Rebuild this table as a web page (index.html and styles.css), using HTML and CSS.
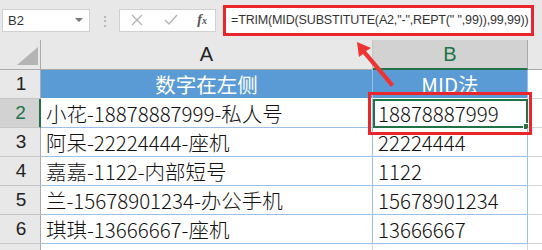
FILE: index.html
```html
<!DOCTYPE html>
<html>
<head>
<meta charset="utf-8">
<link rel="stylesheet" href="styles.css">
</head>
<body>
<div class="app">
  <div class="toolbar">
    <div class="namebox"><span>B2</span><span class="caret"></span></div>
    <div class="sep">⋮</div>
    <div class="btns">
      <svg class="ico" width="14" height="14" viewBox="0 0 14 14"><path d="M2 2L12 12M12 2L2 12" stroke="#b5b5b5" stroke-width="1.4" fill="none"/></svg>
      <svg class="ico" width="16" height="14" viewBox="0 0 16 14"><path d="M2 7L6 11L14 2" stroke="#b5b5b5" stroke-width="1.4" fill="none"/></svg>
      <span class="fx">f<sub>x</sub></span>
    </div>
    <div class="formula">=TRIM(MID(SUBSTITUTE(A2,"-",REPT(" ",99)),99,99))</div>
  </div>
  <div class="sheet">
    <div class="corner"><span class="tri"></span></div>
    <div class="colh">A</div>
    <div class="colh sel">B</div>
    <div class="colh rest"></div>

    <div class="rowh">1</div>
    <div class="cell head">数字在左侧</div>
    <div class="cell head">MID法</div>
    <div class="cell blank"></div>

    <div class="rowh sel">2</div>
    <div class="cell">小花-18878887999-私人号</div>
    <div class="cell active">18878887999<span class="handle"></span></div>
    <div class="cell blank"></div>

    <div class="rowh">3</div>
    <div class="cell">阿呆-22224444-座机</div>
    <div class="cell">22224444</div>
    <div class="cell blank"></div>

    <div class="rowh">4</div>
    <div class="cell">嘉嘉-1122-内部短号</div>
    <div class="cell">1122</div>
    <div class="cell blank"></div>

    <div class="rowh">5</div>
    <div class="cell">兰-15678901234-办公手机</div>
    <div class="cell">15678901234</div>
    <div class="cell blank"></div>

    <div class="rowh">6</div>
    <div class="cell">琪琪-13666667-座机</div>
    <div class="cell">13666667</div>
    <div class="cell blank"></div>

    <div class="rowh last"></div>
    <div class="cell lastc"></div>
    <div class="cell lastc"></div>
    <div class="cell blank"></div>
  </div>
  <div class="redbox"></div>
  <svg class="arrow" width="542" height="250" viewBox="0 0 542 250">
    <polygon points="357,42 371,48 366,51 394,84 391,87 363,54 359,57" fill="#ee3333"/>
  </svg>
</div>
</body>
</html>
```

FILE: styles.css
```css
html, body {
  margin: 0;
  padding: 0;
  background: #e8e8e8;
}
.app {
  position: relative;
  width: 542px;
  height: 250px;
  overflow: hidden;
  font-family: "Noto Sans CJK SC", "Noto Sans", sans-serif;
}
.toolbar {
  height: 40px;
  display: flex;
  align-items: center;
  background: #e8e8e8;
}
.namebox {
  margin-left: 2px;
  width: 88px;
  height: 23px;
  background: #fff;
  border: 1px solid #d0d0d0;
  display: flex;
  align-items: center;
  justify-content: space-between;
  padding: 0 6px 0 5px;
  box-sizing: border-box;
  font-family: "Liberation Sans", Arial, sans-serif;
  font-size: 13px;
  color: #333;
}
.caret {
  width: 0;
  height: 0;
  border-left: 4px solid transparent;
  border-right: 4px solid transparent;
  border-top: 4px solid #777;
}
.sep {
  width: 28px;
  text-align: center;
  color: #a8a8a8;
  font-size: 14px;
  margin-left: 1px;
}
.btns {
  width: 97px;
  height: 23px;
  box-sizing: border-box;
  background: #fff;
  border: 1px solid #d0d0d0;
  display: flex;
  align-items: center;
  justify-content: space-between;
  padding: 0 8px 0 10px;
}
.fx {
  font-family: "Liberation Serif", serif;
  font-style: italic;
  font-weight: bold;
  font-size: 14px;
  color: #555;
}
.fx sub {
  font-size: 10px;
  vertical-align: baseline;
}
.formula {
  margin-left: 7px;
  width: 311px;
  height: 31px;
  box-sizing: border-box;
  background: #fff;
  border: 3px solid #e8262b;
  display: flex;
  align-items: center;
  padding-left: 5px;
  font-family: "Liberation Sans", Arial, sans-serif;
  font-size: 12.5px;
  color: #333;
  white-space: nowrap;
  letter-spacing: -0.15px;
}
.sheet {
  display: grid;
  grid-template-columns: 41px 332px 155px 14px;
  grid-template-rows: 30px repeat(7, 29px);
  background: #fff;
}
.corner {
  background: #e8e8e8;
  border-right: 1px solid #ababab;
  border-bottom: 1px solid #ababab;
  position: relative;
}
.tri {
  position: absolute;
  right: 2px;
  bottom: 4px;
  width: 0;
  height: 0;
  border-left: 21px solid transparent;
  border-bottom: 18px solid #b4b4b4;
}
.colh {
  background: #e8e8e8;
  border-right: 1px solid #c6c6c6;
  border-bottom: 1px solid #ababab;
  display: flex;
  align-items: center;
  justify-content: center;
  font-family: "Liberation Sans", Arial, sans-serif;
  font-size: 20px;
  color: #222;
  box-sizing: border-box;
}
.colh.sel {
  background: #d2d2d2;
  color: #217346;
  border-bottom: 2px solid #217346;
  border-right-color: #ababab;
}
.colh.rest {
  border-right: none;
}
.rowh {
  background: #e8e8e8;
  border-right: 1px solid #ababab;
  border-bottom: 1px solid #c6c6c6;
  display: flex;
  align-items: center;
  justify-content: center;
  font-family: "Liberation Sans", Arial, sans-serif;
  font-size: 19px;
  color: #222;
  padding-left: 2px;
}
.rowh.sel {
  background: #d2d2d2;
  color: #217346;
  border-right: 2px solid #217346;
}
.cell {
  border-right: 1px solid #9bc2e6;
  border-bottom: 1px solid #9bc2e6;
  display: flex;
  align-items: center;
  padding-left: 5px;
  font-size: 20.5px;
  font-weight: 300;
  color: #111;
  white-space: nowrap;
  overflow: hidden;
  position: relative;
}
.cell.head {
  background: #5b9bd5;
  color: #fff;
  justify-content: center;
  padding-left: 0;
  font-weight: 400;
  border-right-color: #9bc2e6;
  border-bottom-color: #ffffff;
}
.cell.blank {
  border-right: none;
  border-bottom: 1px solid #d4d4d4;
  padding: 0;
  background: #fff;
}
.cell.active {
  outline: 2px solid #217346;
  outline-offset: -2px;
  overflow: visible;
}
.handle {
  position: absolute;
  right: -3px;
  bottom: -3px;
  width: 5px;
  height: 5px;
  background: #217346;
  border: 1px solid #fff;
}
.rowh.last {
  border-bottom: none;
}
.cell.lastc {
  border-bottom: none;
  border-right-color: #d4d4d4;
}
.redbox {
  position: absolute;
  left: 368px;
  top: 92px;
  width: 164px;
  height: 43px;
  box-sizing: border-box;
  border: 3px solid #e8262b;
}
.arrow {
  position: absolute;
  left: 0;
  top: 0;
  pointer-events: none;
}
```
